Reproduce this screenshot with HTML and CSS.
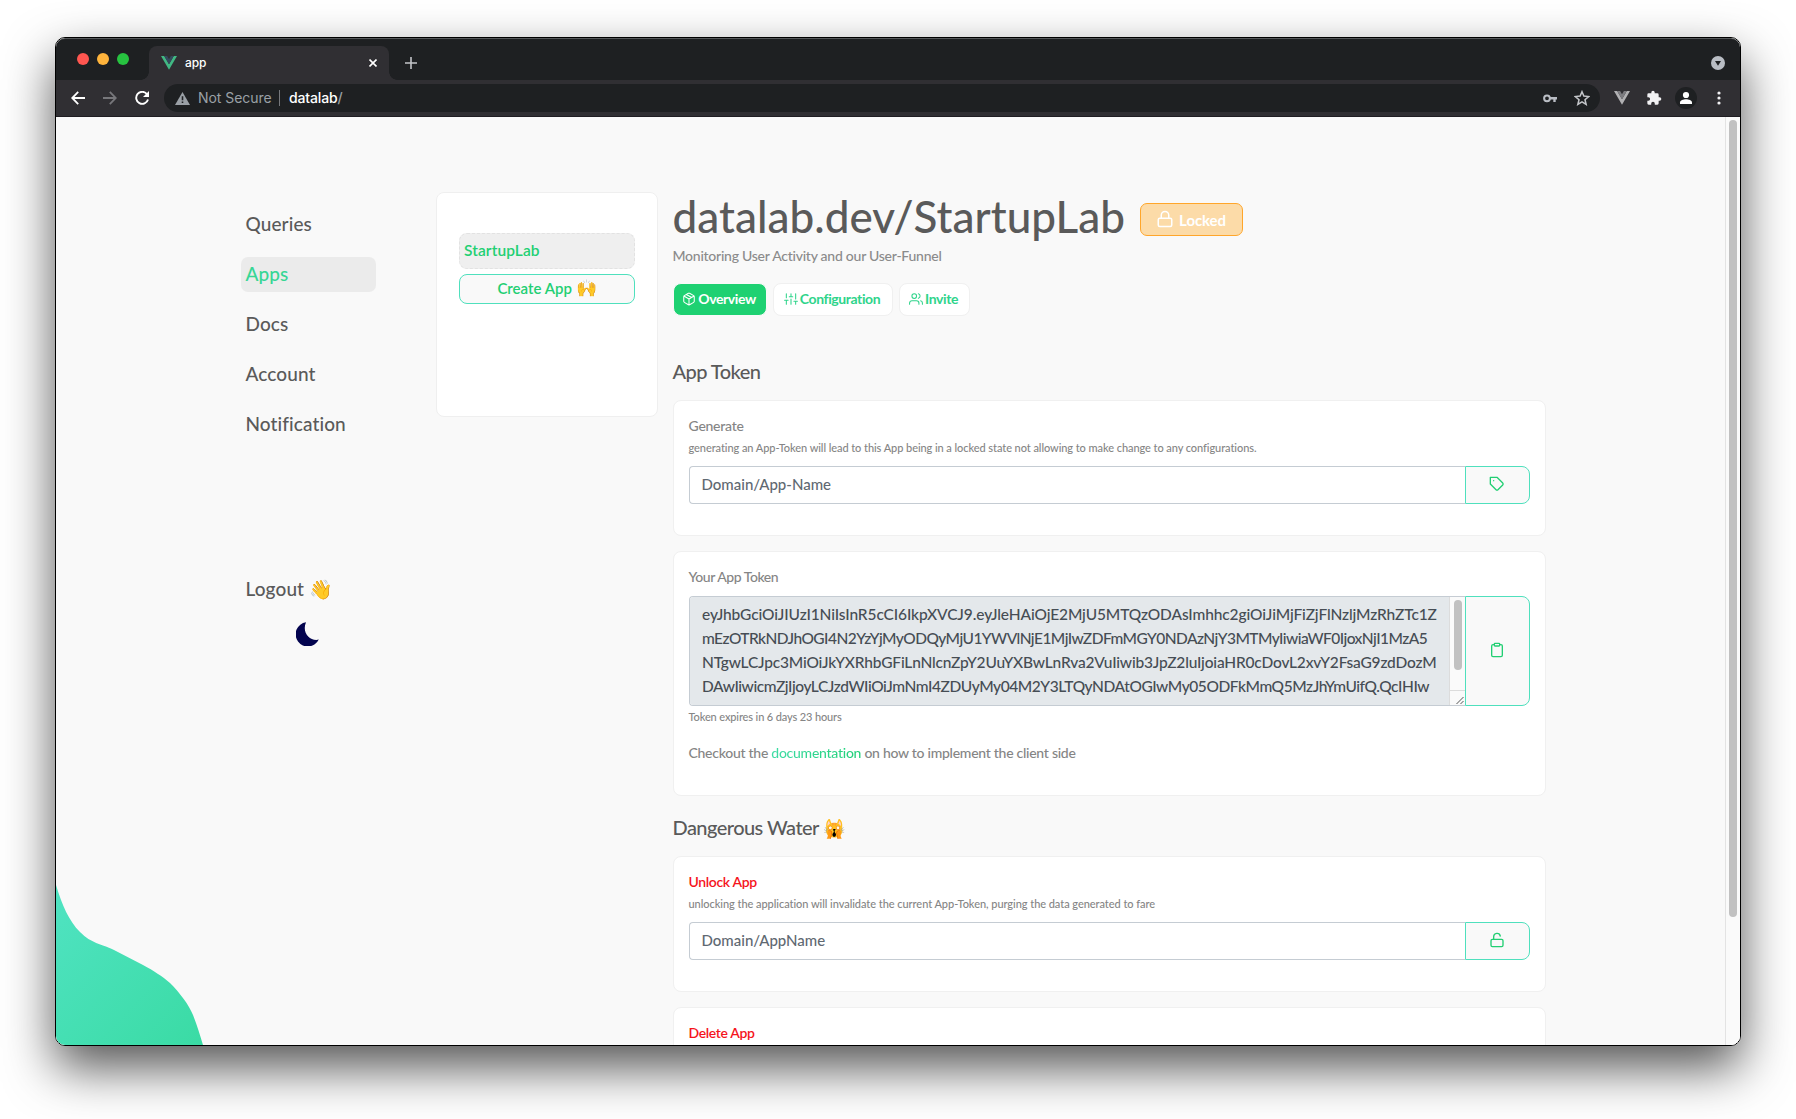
FILE: index.html
```html
<!DOCTYPE html>
<html lang="en">
<head>
<meta charset="utf-8">
<title>app</title>
<link rel="stylesheet" href="styles.css">
</head>
<body>
<div class="window">
  <div class="tabstrip">
    <div class="lights"><i class="red"></i><i class="yellow"></i><i class="green"></i></div>
    <div class="tab">
      <svg class="vue" viewBox="0 0 16 14"><path fill="#41b883" d="M0 0h3.2L8 8.3 12.8 0H16L8 13.8z"/><path fill="#35495e" d="M3.2 0h2.9L8 3.3 9.9 0h2.9L8 8.3z"/></svg>
      <span class="tab-title">app</span>
      <svg class="close" viewBox="0 0 8 8"><path d="M.5.5l7 7M7.5.5l-7 7" stroke="#fff" stroke-width="1.6"/></svg>
    </div>
    <svg class="plus" viewBox="0 0 12 12"><path d="M6 0v12M0 6h12" stroke="#c3c5c9" stroke-width="1.6"/></svg>
    <svg class="search-tabs" viewBox="0 0 14 14"><circle cx="7" cy="7" r="7" fill="#b9bdc4"/><path d="M4 5h6L7 9.800z" fill="#1e2022"/></svg>
  </div>
  <div class="toolbar">
    <svg class="nav" viewBox="0 0 14 14"><path d="M14 7H1.5M7.2.8L1.2 7l6 6.2" fill="none" stroke="#fff" stroke-width="1.8"/></svg>
    <svg class="nav" viewBox="0 0 14 14"><path d="M0 7h12.5M6.8.8l6 6.2-6 6.2" fill="none" stroke="#77777b" stroke-width="1.8"/></svg>
    <svg class="nav reload" viewBox="0 0 14 14"><path d="M12 3.2A6 6 0 1 0 13 8.4" fill="none" stroke="#fff" stroke-width="1.9"/><path d="M14 0v6H8z" fill="#fff"/></svg>
    <div class="omnibox">
      <svg class="warn" viewBox="0 0 15 13"><path d="M7.5 0L15 13H0z" fill="#9aa0a6"/><path d="M7.5 4.3v3.9M7.5 9.4v1.7" stroke="#1e2022" stroke-width="1.6"/></svg>
      <span class="insecure">Not Secure</span><span class="sep"></span><span class="url">datalab<em>/</em></span>
      <svg class="key" viewBox="0 0 14 9"><circle cx="4" cy="4.3" r="2.9" fill="none" stroke="#b9bdc4" stroke-width="2"/><path d="M7 4.3h7M11.5 4v4" stroke="#b9bdc4" stroke-width="2.4"/></svg>
      <svg class="star" viewBox="0 0 24 24"><path d="M12 2.6l2.8 6.6 7.2.6-5.5 4.7 1.7 7-6.2-3.7-6.2 3.7 1.7-7L2 9.800l7.200-.6z" fill="none" stroke="#c3c5c9" stroke-width="2.300"/></svg>
    </div>
    <svg class="vue-gray" viewBox="0 0 16 14"><path fill="#b0b0b2" d="M0 0h3.200L8 8.300 12.800 0H16L8 13.800z"/><path fill="#7c7c80" d="M3.200 0h2.900L8 3.300 9.900 0h2.900L8 8.300z"/></svg>
    <svg class="puzzle" viewBox="0 0 24 24"><path fill="#f1f1f3" d="M20.500 11H19V7a2 2 0 0 0-2-2h-4V3.500a2.500 2.500 0 0 0-5 0V5H4a2 2 0 0 0-2 2v3.800h1.500a2.700 2.700 0 0 1 0 5.400H2V20a2 2 0 0 0 2 2h3.800v-1.500a2.700 2.700 0 0 1 5.400 0V22H17a2 2 0 0 0 2-2v-4h1.500a2.500 2.500 0 0 0 0-5z"/></svg>
    <svg class="avatar" viewBox="0 0 22 22"><circle cx="11" cy="11" r="11" fill="#1e2022"/><circle cx="11" cy="8" r="3.100" fill="#fff"/><path d="M5 17v-1.500c0-2.200 3.500-3.300 6-3.300s6 1.100 6 3.300V17z" fill="#fff"/></svg>
    <svg class="dots" viewBox="0 0 4 14"><g fill="#f1f1f3"><circle cx="2" cy="2" r="1.600"/><circle cx="2" cy="7" r="1.600"/><circle cx="2" cy="12" r="1.600"/></g></svg>
  </div>
  <div class="viewport">
    <div class="page">
      <nav class="sidebar">
        <a>Queries</a>
        <a class="active">Apps</a>
        <a>Docs</a>
        <a>Account</a>
        <a>Notification</a>
        <a class="logout">Logout <span class="emoji">👋</span></a>
        <svg class="moon" viewBox="0 0 23 24"><path fill="#03044f" d="M10 .2A12.200 12.200 0 1 0 22.800 17.600C14 19.600 5.500 10.600 10 .2z"/></svg>
      </nav>
      <section class="apps">
        <div class="app-item">StartupLab</div>
        <button class="create">Create App <span class="emoji">🙌</span></button>
      </section>
      <main class="main">
        <header class="head">
          <h1>datalab.dev/StartupLab</h1>
          <span class="locked"><svg class="ic" viewBox="0 0 24 24"><rect x="3" y="11" width="18" height="11" rx="2"/><path d="M7 11V7a5 5 0 0 1 10 0v4"/></svg>Locked</span>
        </header>
        <p class="subtitle">Monitoring User Activity and our User-Funnel</p>
        <div class="tabs">
          <a class="t-overview"><svg class="ic" viewBox="0 0 24 24"><path d="M21 16V8a2 2 0 0 0-1-1.730l-7-4a2 2 0 0 0-2 0l-7 4A2 2 0 0 0 3 8v8a2 2 0 0 0 1 1.730l7 4a2 2 0 0 0 2 0l7-4A2 2 0 0 0 21 16zM3.270 6.960L12 12.010l8.730-5.050M12 22.080V12M7.500 4.210l9 5.190"/></svg>Overview</a>
          <a class="t-config"><svg class="ic" viewBox="0 0 24 24"><path d="M4 21v-7M4 10V3M12 21v-9M12 8V3M20 21v-5M20 12V3M1 14h6M9 8h6M17 16h6"/></svg>Configuration</a>
          <a class="t-invite"><svg class="ic" viewBox="0 0 24 24"><path d="M17 21v-2a4 4 0 0 0-4-4H5a4 4 0 0 0-4 4v2M23 21v-2a4 4 0 0 0-3-3.870M16 3.130a4 4 0 0 1 0 7.750"/><circle cx="9" cy="7" r="4"/></svg>Invite</a>
        </div>
        <h2 class="first">App Token</h2>
        <section class="card">
          <h3>Generate</h3>
          <p class="hint">generating an App-Token will lead to this App being in a locked state not allowing to make change to any configurations.</p>
          <div class="group"><div class="field">Domain/App-Name</div><button class="act"><svg class="ic" viewBox="0 0 24 24"><path d="M20.590 13.410l-7.170 7.170a2 2 0 0 1-2.830 0L2 12V2h10l8.590 8.590a2 2 0 0 1 0 2.820zM7 7h.01"/></svg></button></div>
        </section>
        <section class="card tall">
          <h3 class="narrow">Your App Token</h3>
          <div class="group token">
            <div class="area">
              <div class="area-text"><span class="l1">eyJhbGciOiJIUzI1NiIsInR5cCI6IkpXVCJ9.eyJleHAiOjE2MjU5MTQzODAsImhhc2giOiJiMjFiZjFlNzljMzRhZTc1Z</span><span class="l2">mEzOTRkNDJhOGI4N2YzYjMyODQyMjU1YWVlNjE1MjIwZDFmMGY0NDAzNjY3MTMyIiwiaWF0IjoxNjI1MzA5</span><span class="l3">NTgwLCJpc3MiOiJkYXRhbGFiLnNlcnZpY2UuYXBwLnRva2VuIiwib3JpZ2luIjoiaHR0cDovL2xvY2FsaG9zdDozM</span><span class="l4">DAwIiwicmZjIjoyLCJzdWIiOiJmNmI4ZDUyMy04M2Y3LTQyNDAtOGIwMy05ODFkMmQ5MzJhYmUifQ.QcIHIw</span></div>
              <div class="area-bar"><i class="thumb"></i><svg class="grip" viewBox="0 0 14 14"><path d="M6 13L13 6M10 13l3-3" stroke="#555" stroke-width="1"/></svg></div>
            </div>
            <button class="act"><svg class="ic" viewBox="0 0 24 24"><path d="M16 4h2a2 2 0 0 1 2 2v14a2 2 0 0 1-2 2H6a2 2 0 0 1-2-2V6a2 2 0 0 1 2-2h2"/><rect x="8" y="2" width="8" height="4" rx="1"/></svg></button>
          </div>
          <p class="hint expiry">Token expires in 6 days 23 hours</p>
          <p class="docs">Checkout the <a>documentation</a> on how to implement the client side</p>
        </section>
        <h2 class="second">Dangerous Water <span class="emoji">🙀</span></h2>
        <section class="card">
          <h3 class="danger">Unlock App</h3>
          <p class="hint wide">unlocking the application will invalidate the current App-Token, purging the data generated to fare</p>
          <div class="group"><div class="field">Domain/AppName</div><button class="act"><svg class="ic" viewBox="0 0 24 24"><rect x="3" y="11" width="18" height="11" rx="2"/><path d="M7 11V7a5 5 0 0 1 9.900-1"/></svg></button></div>
        </section>
        <section class="card">
          <h3 class="danger">Delete App</h3>
        </section>
      </main>
      <svg class="blob" viewBox="0 0 148 160"><defs><linearGradient id="g" x1="0" y1="0" x2="1" y2="1"><stop offset="0" stop-color="#50e3c2"/><stop offset="1" stop-color="#3adba4"/></linearGradient></defs><path fill="url(#g)" d="M0 0C6 20 13 36 24 47C36 59 44 58 58 65L87 80C98 86 106 91 114 98C124 108 133 120 137 130C141 140 144 150 147 160H0z"/></svg>
    </div>
    <div class="scroll"><i></i></div>
  </div>
</div>
</body>
</html>
```
FILE: styles.css
```css
* { box-sizing: border-box; }
body {
  margin: 0;
  height: 1119px;
  padding: 37px 55px 0;
  overflow: hidden;
  background: #fff;
  color: #5a5a5a;
  font-family: Lato, "Noto Sans", sans-serif;
  font-weight: 500;
}
h1, h2, h3, p { margin: 0; font-weight: 500; }
svg { display: block; flex: none; }
button { font: inherit; padding: 0; margin: 0; }
.ic { fill: none; stroke: currentColor; stroke-width: 2; stroke-linecap: round; stroke-linejoin: round; }

.window {
  width: 1686px;
  height: 1009px;
  border: 1px solid #000;
  border-radius: 10px;
  overflow: hidden;
  display: flex;
  flex-direction: column;
  box-shadow: 0 22px 50px rgba(0, 0, 0, .67);
}

/* Browser chrome */
.tabstrip {
  height: 42px;
  flex: none;
  display: flex;
  align-items: flex-start;
  background: #1e2022;
  border-top: 1px solid #55585a;
  border-radius: 9px 9px 0 0;
  font-family: Inter, sans-serif;
}
.lights { display: flex; gap: 8px; padding: 14px 0 0 21px; width: 93px; }
.lights i { width: 12px; height: 12px; border-radius: 50%; }
.red { background: #ff5650; }
.yellow { background: #ffb43c; }
.green { background: #27c340; }
.tab {
  position: relative;
  width: 240px;
  height: 34px;
  margin-top: 7px;
  padding: 0 12px;
  display: flex;
  align-items: center;
  background: #302f33;
  border-radius: 8px 8px 0 0;
}
.tab::before, .tab::after {
  content: "";
  position: absolute;
  bottom: 0;
  width: 8px;
  height: 8px;
}
.tab::before { left: -8px; background: radial-gradient(circle at 0 0, transparent 7.500px, #302f33 8px); }
.tab::after { right: -8px; background: radial-gradient(circle at 100% 0, transparent 7.500px, #302f33 8px); }
.vue { width: 16px; height: 14px; }
.tab-title { flex: 1; margin-left: 8px; padding-bottom: 1px; color: #fff; font-size: 12px; letter-spacing: -.1px; }
.close { width: 8px; height: 8px; }
.plus { width: 12px; height: 12px; margin: 18px 0 0 16px; }
.search-tabs { width: 14px; height: 14px; margin: 17px 15px 0 auto; }
.toolbar {
  height: 37px;
  flex: none;
  display: flex;
  align-items: center;
  background: #302f33;
  border-bottom: 1px solid #1f1d22;
  padding: 0 19px 0 15px;
}
.nav { width: 14px; height: 14px; margin-right: 18px; }
.reload { margin-right: 15px; }
.omnibox {
  width: 1436px;
  height: 28px;
  padding: 0 10px 0 11px;
  display: flex;
  align-items: center;
  border-radius: 14px;
  background: #1e2022;
  font: 400 14px Inter, sans-serif;
}
.warn { width: 15px; height: 13px; }
.insecure { margin-left: 8px; padding-bottom: 1px; color: #9aa0a6; width: 74px; letter-spacing: -.05px; white-space: nowrap; }
.sep { width: 1px; height: 16px; margin: 0 9px 0 7px; background: #77787c; }
.url { flex: 1; padding-bottom: 1px; color: #fff; font-weight: 500; letter-spacing: -.15px; }
.url em { font-style: normal; color: #9aa0a6; }
.key { width: 14px; height: 9px; margin-right: 17px; }
.star { width: 16px; height: 16px; }
.vue-gray { width: 16px; height: 14px; margin: 0 16px 0 14px; }
.puzzle { width: 16px; height: 16px; }
.avatar { width: 22px; height: 22px; margin: 0 20px 0 13px; }
.dots { width: 4px; height: 14px; }

/* Page */
.viewport { flex: 1; min-height: 0; display: flex; background: #f9f9f9; }
.page { position: relative; width: 1669px; display: flex; padding-left: 185px; overflow: hidden; }
.scroll { width: 15px; padding: 3px 3px 0; background: #fafafa; border-left: 1px solid #e3e3e3; }
.scroll i { display: block; width: 8px; height: 797px; border-radius: 4px; background: #c1c1c1; }
.blob { position: absolute; left: 0; bottom: 0; width: 148px; height: 160px; }

.sidebar { width: 135px; margin-right: 60px; padding-top: 90px; display: flex; flex-direction: column; gap: 15px; flex: none; }
.sidebar a { height: 35px; line-height: 33px; padding-left: 4.500px; border-radius: 7px; font-size: 19px; letter-spacing: .1px; white-space: nowrap; }
.sidebar .active { background: #ebebeb; color: #37d695; }
.sidebar .logout { margin-top: 115px; }
.moon { width: 23px; height: 24px; margin-left: 55px; }

.apps {
  width: 222px;
  height: 225px;
  flex: none;
  margin: 75px 15px 0 0;
  padding: 40px 22px;
  background: #fff;
  border: 1px solid #efefef;
  border-radius: 8px;
  color: #22cf73;
  font-size: 15px;
}
.app-item { height: 36px; line-height: 33px; padding-left: 4px; border: 1px dashed #e2e2e2; border-radius: 8px; background: #efefef; font-size: 15.500px; font-weight: 600; letter-spacing: .1px; }
.create { display: block; width: 176px; height: 30px; margin-top: 5px; padding-bottom: 1px; border: 1px solid #4fe0bd; border-radius: 8px; background: #f9f9f9; color: #22cf73; font-weight: 600; line-height: 27px; }
.create .emoji { font-size: 17px; line-height: 1; }

.main { width: 873px; flex: none; padding-top: 74px; }
h1, h2, h3, .subtitle, .hint, .docs { text-indent: -.5px; }
.head { height: 54px; display: flex; }
.head h1 { width: 467px; font-size: 44px; line-height: 51px; white-space: nowrap; letter-spacing: .04px; }
.locked {
  width: 103px;
  height: 33px;
  margin-top: 12px;
  padding-right: 1px;
  display: flex;
  align-items: center;
  justify-content: center;
  gap: 5px;
  border: 1px solid #ffa62b;
  border-radius: 7px;
  background: #fcdba8;
  color: #fff;
  font-size: 15px;
  font-weight: 700;
  letter-spacing: -.1px;
}
.locked .ic { width: 18px; height: 18px; margin-top: -2px; }
.subtitle { font-size: 14px; line-height: 21px; letter-spacing: -.25px; color: #8b8b8b; }
.tabs { display: flex; gap: 6px; margin-top: 17px; height: 33px; }
.tabs a {
  display: flex;
  align-items: center;
  justify-content: center;
  gap: 2px;
  padding: 0 2px 2px 0;
  border: 1px solid #f0f0f0;
  border-radius: 8px;
  background: #fff;
  color: #2fd48b;
  font-size: 14px;
  font-weight: 700;
  letter-spacing: -.4px;
}
.tabs .ic { width: 14px; height: 14px; stroke-width: 1.800; }
.tabs .t-overview { width: 94px; background: #1ed172; border-color: #f9f9f9; color: #fff; }
.tabs .t-config { width: 120px; }
.tabs .t-invite { width: 71px; }
h2 { height: 24px; line-height: 23px; font-size: 20px; letter-spacing: -.55px; white-space: nowrap; }
h2 .emoji { font-size: 18px; }
.first { margin: 44px 0 16px; }
.second { margin: 20px 0 16px; }
.card { height: 136px; margin-bottom: 15px; padding: 14px 15px; background: #fff; border: 1px solid #f0f0f0; border-radius: 8px; }
.tall { height: 245px; }
h3 { font-size: 14px; line-height: 22px; letter-spacing: -.25px; color: #858585; }
.narrow { letter-spacing: -.45px; }
.danger { color: #f5141c; letter-spacing: -.35px; font-weight: 600; }
.hint { font-size: 11px; line-height: 22px; letter-spacing: -.07px; color: #858585; white-space: nowrap; }
.wide { letter-spacing: -.05px; }
.expiry { letter-spacing: -.13px; }
.group { display: flex; height: 38px; margin-top: 7px; }
.field { flex: 1; padding-left: 12px; line-height: 35px; border: 1px solid #c5ccd3; border-right: 0; border-radius: 4px 0 0 4px; font-size: 15px; text-indent: -.5px; color: #5f6972; }
.act { width: 65px; padding: 0 2px 2px 0; display: flex; align-items: center; justify-content: center; border: 1px solid #4fe0bd; border-radius: 0 8px 8px 0; background: #f9f9f9; color: #22cf73; }
.act .ic { width: 16px; height: 16px; }
.token { height: 110px; margin-top: 8px; }
.area { flex: 1; min-width: 0; display: flex; border: 1px solid #c5ccd3; border-right: 0; border-radius: 4px 0 0 4px; overflow: hidden; }
.area-text { flex: 1; min-width: 0; padding: 6px 0 0 12px; background: #e4e8eb; color: #464d54; font-size: 15.500px; }
.area-text span { display: block; height: 24px; line-height: 23px; white-space: nowrap; }
.l1 { letter-spacing: -.11px; }
.l2 { letter-spacing: -.54px; }
.l3 { letter-spacing: -.19px; }
.l4 { letter-spacing: -.43px; }
.area-bar { width: 16px; border-left: 1px solid #dcdcdc; background: #fafafa; display: flex; flex-direction: column; align-items: center; justify-content: space-between; padding-top: 3px; }
.thumb { width: 8px; height: 70px; border-radius: 4px; background: #c1c1c1; }
.grip { width: 15px; height: 15px; border-top: 1px solid #dcdcdc; }
.docs { margin-top: 14px; font-size: 14px; line-height: 22px; letter-spacing: -.27px; color: #858585; }
.docs a { background: linear-gradient(90deg, #3fdca5, #20d078); background-clip: text; color: transparent; }
```
